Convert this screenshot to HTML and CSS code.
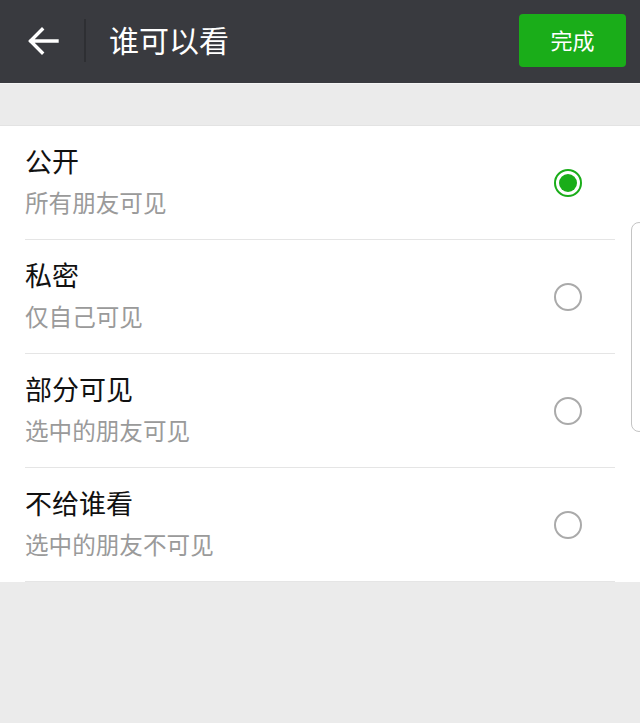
FILE: index.html
```html
<!DOCTYPE html>
<html lang="zh">
<head>
<meta charset="utf-8">
<title>谁可以看</title>
<link rel="stylesheet" href="styles.css">
</head>
<body>
<header class="topbar">
  <div class="back">
    <svg width="32" height="28" viewBox="0 0 32 28"><path d="M30 14H4M15 2.5L3.5 14L15 25.5" fill="none" stroke="#fff" stroke-width="3.4" stroke-linecap="square"/></svg>
  </div>
  <div class="sep"></div>
  <h1 class="title">谁可以看</h1>
  <button class="done">完成</button>
</header>
<div class="gap"></div>
<ul class="list">
  <li class="row">
    <div class="text"><div class="main">公开</div><div class="sub">所有朋友可见</div></div>
    <span class="radio on"></span>
  </li>
  <li class="row">
    <div class="text"><div class="main">私密</div><div class="sub">仅自己可见</div></div>
    <span class="radio"></span>
  </li>
  <li class="row">
    <div class="text"><div class="main">部分可见</div><div class="sub">选中的朋友可见</div></div>
    <span class="radio"></span>
  </li>
  <li class="row">
    <div class="text"><div class="main">不给谁看</div><div class="sub">选中的朋友不可见</div></div>
    <span class="radio"></span>
  </li>
</ul>
<div class="handle"></div>
</body>
</html>
```
FILE: styles.css
```css
* { box-sizing: border-box; }
html, body { margin: 0; padding: 0; }
body {
  width: 640px;
  height: 723px;
  background: #ebebeb;
  font-family: "Noto Sans CJK SC", "Noto Sans", sans-serif;
  overflow: hidden;
  position: relative;
}
.topbar {
  height: 84px;
  background: #393a3f;
  display: flex;
  align-items: center;
  padding: 0 14px 0 27px;
  border-bottom: 1px solid #f4f4f4;
}
.back { width: 34px; height: 28px; display: flex; align-items: center; margin-top: -2px; }
.sep {
  width: 2px;
  height: 43px;
  background: #2e2f33;
  margin-left: 23px;
  margin-top: -2px;
}
.title {
  margin: -5px 0 0 23px;
  font-size: 30px;
  font-weight: 400;
  color: #fff;
  line-height: 40px;
  flex: 1;
}
.done {
  width: 107px;
  height: 53px;
  background: #1aad19;
  border: 0;
  border-radius: 4px;
  color: #fff;
  font-family: inherit;
  font-size: 22px;
  padding: 0 0 4px;
  margin-top: -2px;
}
.gap { height: 42px; border-bottom: 1px solid #e3e3e3; }
.list {
  list-style: none;
  margin: 0;
  padding: 0 0 0 25px;
  background: #fff;
}
.row {
  height: 114px;
  display: flex;
  align-items: center;
  border-bottom: 1px solid #e5e5e5;
  margin-right: 25px;
  padding-right: 33px;
}
.text { flex: 1; padding-bottom: 4px; }
.main { font-size: 27px; line-height: 38px; color: #111; }
.sub { font-size: 23.6px; line-height: 36px; color: #9a9a9a; margin-top: 4px; }
.radio {
  width: 28px;
  height: 28px;
  border-radius: 50%;
  border: 2px solid #aaaaaa;
  position: relative;
}
.radio.on { border-color: #1aad19; }
.radio.on::after {
  content: "";
  position: absolute;
  left: 3px; top: 3px;
  width: 18px; height: 18px;
  border-radius: 50%;
  background: #1aad19;
}
.handle {
  position: absolute;
  left: 631px;
  top: 222px;
  width: 16px;
  height: 210px;
  border: 1.5px solid #c4c4c4;
  border-radius: 9px;
  background: #fff;
}
```
